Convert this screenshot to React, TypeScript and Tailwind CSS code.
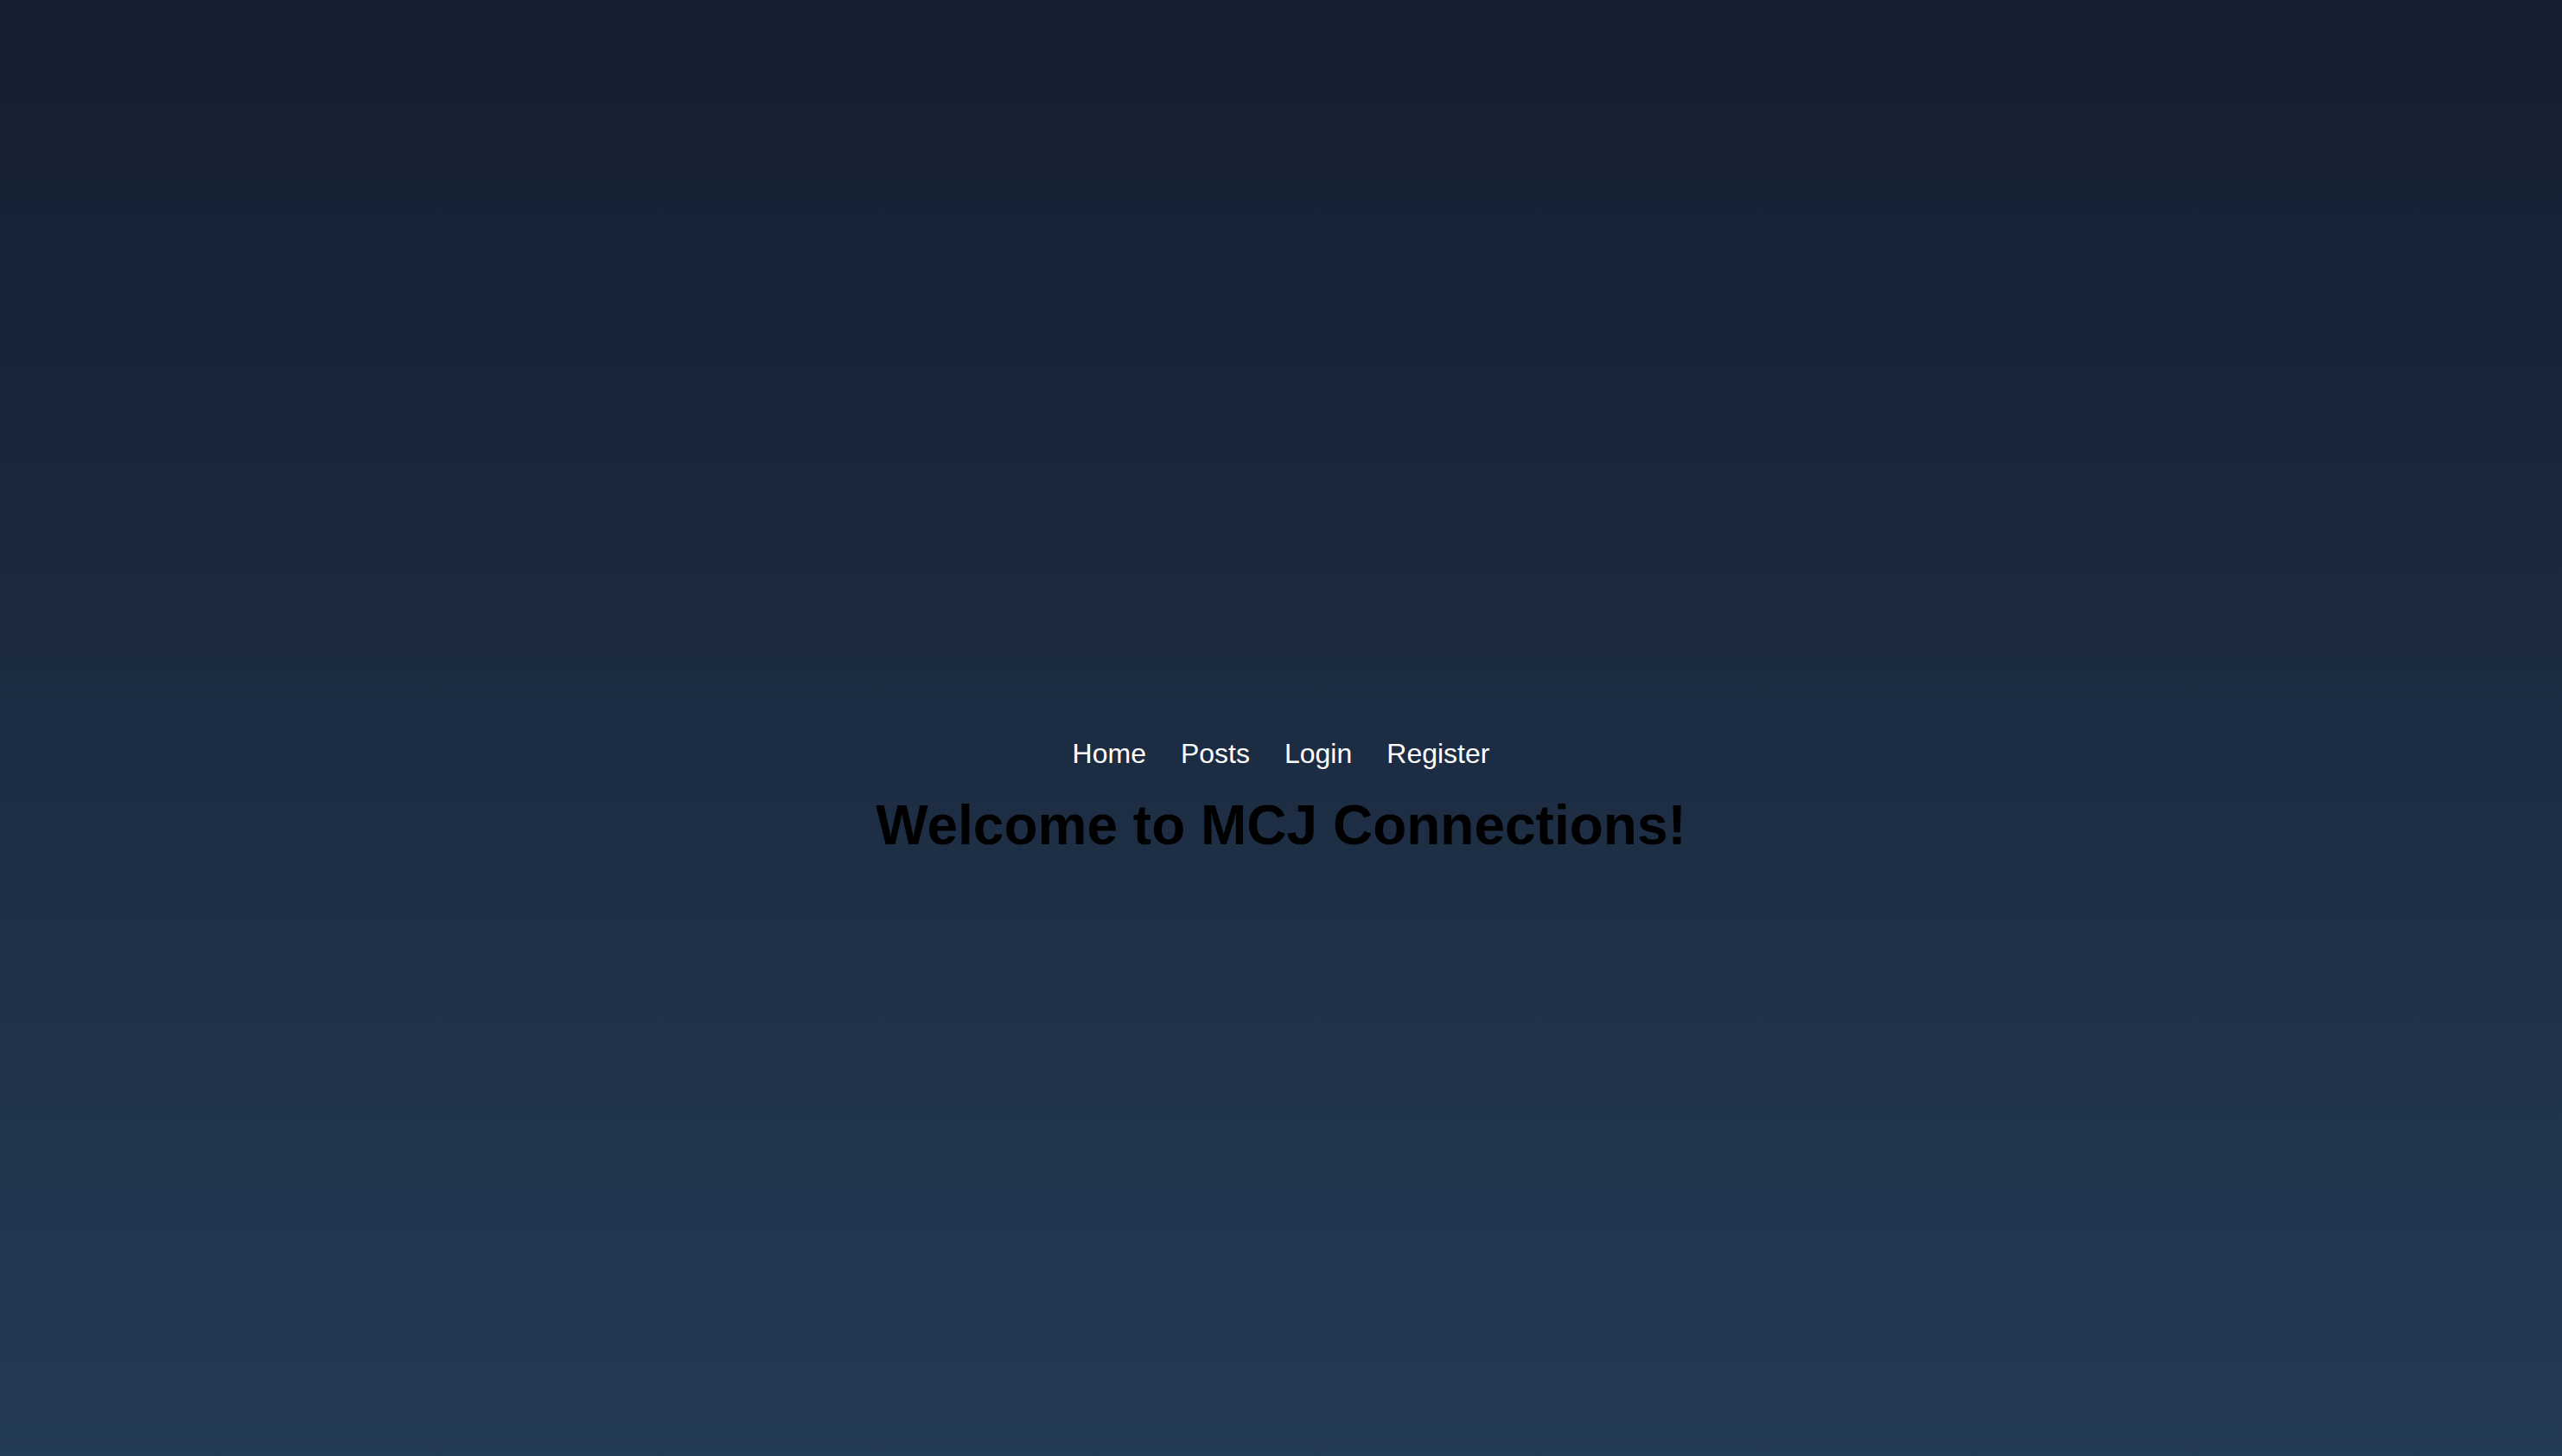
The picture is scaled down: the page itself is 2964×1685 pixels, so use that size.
import React from 'react';

const links = ['Home', 'Posts', 'Login', 'Register'];

const App: React.FC = () => {
  return (
    <div className="min-h-screen w-full bg-gradient-to-b from-[#141e30] to-[#243b55] font-['Liberation_Sans',Arial,sans-serif]">
      <div className="flex flex-col items-center pt-[854px]">
        {/* Navigation */}
        <nav className="flex items-center gap-[40px]">
          {links.map((label) => (
            <a key={label} href="#" className="text-[32px] leading-[37px] text-white no-underline">
              {label}
            </a>
          ))}
        </nav>

        <h1 className="mt-[27px] text-[64px] leading-[74px] font-bold text-black">
          Welcome to MCJ Connections!
        </h1>
      </div>
    </div>
  );
};

export default App;
